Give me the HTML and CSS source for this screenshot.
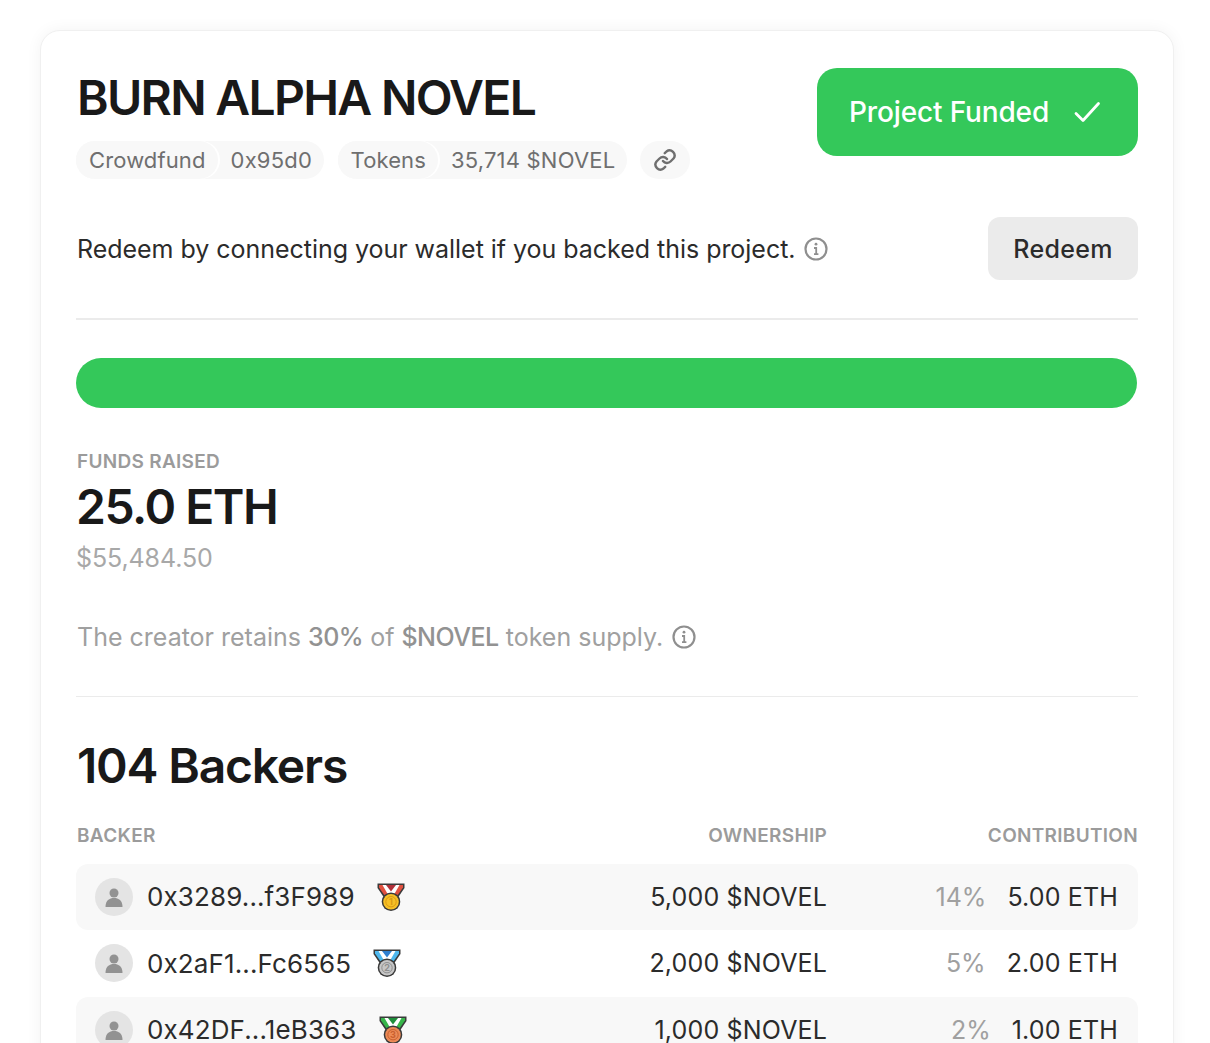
FILE: index.html
```html
<!DOCTYPE html>
<html lang="en">
<head>
<meta charset="utf-8">
<title>BURN ALPHA NOVEL</title>
<link rel="stylesheet" href="styles.css">
</head>
<body>
<main class="card">
  <header class="top">
    <div class="top-left">
      <h1 class="title">BURN ALPHA NOVEL</h1>
      <div class="tags">
        <div class="tag"><span class="tag-key">Crowdfund</span><span class="tag-val">0x95d0</span></div>
        <div class="tag"><span class="tag-key">Tokens</span><span class="tag-val">35,714 $NOVEL</span></div>
        <div class="tag-link">
          <svg class="link-icon" viewBox="0 0 24 24" fill="none" stroke="currentColor" stroke-width="2.4" stroke-linecap="round" stroke-linejoin="round"><path d="M10 13a5 5 0 0 0 7.500.5l3-3a5 5 0 0 0-7-7l-1.700 1.700"/><path d="M14 11a5 5 0 0 0-7.500-.5l-3 3a5 5 0 0 0 7 7l1.700-1.700"/></svg>
        </div>
      </div>
    </div>
    <div class="funded">
      <span>Project Funded</span>
      <svg class="check" viewBox="0 0 28 28" fill="none" stroke="currentColor" stroke-width="2.8" stroke-linecap="round" stroke-linejoin="round"><path d="M3 15.500l7 7L25.500 5.500"/></svg>
    </div>
  </header>

  <section class="redeem">
    <p class="redeem-text">Redeem by connecting your wallet if you backed this project.
      <svg class="info" viewBox="0 0 24 24" fill="none" stroke="currentColor" stroke-width="2.2"><circle cx="12" cy="12" r="10.5"/><path d="M10 11h2.200v6M10 17.200h4.400" stroke-width="1.8"/><circle cx="12" cy="7.200" r="1.400" fill="currentColor" stroke="none"/></svg>
    </p>
    <div class="redeem-btn">Redeem</div>
  </section>

  <div class="progress"></div>

  <section class="funds">
    <div class="label">FUNDS RAISED</div>
    <div class="amount">25.0 ETH</div>
    <div class="usd">$55,484.50</div>
  </section>

  <p class="retain">The creator retains <b>30%</b> of <b>$NOVEL</b> token supply.
    <svg class="info" viewBox="0 0 24 24" fill="none" stroke="currentColor" stroke-width="2.2"><circle cx="12" cy="12" r="10.5"/><path d="M10 11h2.200v6M10 17.200h4.400" stroke-width="1.8"/><circle cx="12" cy="7.200" r="1.400" fill="currentColor" stroke="none"/></svg>
  </p>

  <section class="backers">
    <h2 class="backers-title">104 Backers</h2>
    <div class="table-head">
      <span class="label">BACKER</span>
      <span class="label right">OWNERSHIP</span>
      <span class="label right">CONTRIBUTION</span>
    </div>

    <div class="row shaded">
      <div class="who">
        <span class="avatar"><svg viewBox="0 0 38 38"><circle cx="19" cy="15" r="4.500"/><path d="M10.500 29c0-6.500 3.800-9 8.500-9s8.500 2.500 8.500 9z"/></svg></span>
        <span class="addr">0x3289...f3F989</span>
        <svg class="medal gold" viewBox="0 0 28 28"><path class="m-line" d="M.5 .5h27v4.500L20 16H8L.5 5z"/><path class="m-outer" d="M2 2h24v2.500L19 14.500H9L2 4.500z"/><path class="m-white" d="M5.500 2h17l-6 10.500h-5z"/><path class="m-core" d="M9 2h10l-5 6.500z"/><circle class="m-line" cx="14" cy="18.700" r="9.300"/><circle class="m-coin" cx="14" cy="18.700" r="7.800"/><circle class="m-ring" cx="14" cy="18.700" r="5.200"/><text class="m-num" x="14" y="22">1</text></svg>
      </div>
      <div class="own">5,000 $NOVEL</div>
      <div class="contrib"><span class="pct">14%</span><span class="eth">5.00 ETH</span></div>
    </div>

    <div class="row">
      <div class="who">
        <span class="avatar"><svg viewBox="0 0 38 38"><circle cx="19" cy="15" r="4.500"/><path d="M10.500 29c0-6.500 3.800-9 8.500-9s8.500 2.500 8.500 9z"/></svg></span>
        <span class="addr">0x2aF1...Fc6565</span>
        <svg class="medal silver" viewBox="0 0 28 28"><path class="m-line" d="M.5 .5h27v4.500L20 16H8L.5 5z"/><path class="m-outer" d="M2 2h24v2.500L19 14.500H9L2 4.500z"/><path class="m-white" d="M5.500 2h17l-6 10.500h-5z"/><path class="m-core" d="M9 2h10l-5 6.500z"/><circle class="m-line" cx="14" cy="18.700" r="9.300"/><circle class="m-coin" cx="14" cy="18.700" r="7.800"/><circle class="m-ring" cx="14" cy="18.700" r="5.200"/><text class="m-num" x="14" y="22">2</text></svg>
      </div>
      <div class="own">2,000 $NOVEL</div>
      <div class="contrib"><span class="pct">5%</span><span class="eth">2.00 ETH</span></div>
    </div>

    <div class="row shaded">
      <div class="who">
        <span class="avatar"><svg viewBox="0 0 38 38"><circle cx="19" cy="15" r="4.500"/><path d="M10.500 29c0-6.500 3.800-9 8.500-9s8.500 2.500 8.500 9z"/></svg></span>
        <span class="addr">0x42DF...1eB363</span>
        <svg class="medal bronze" viewBox="0 0 28 28"><path class="m-line" d="M.5 .5h27v4.500L20 16H8L.5 5z"/><path class="m-outer" d="M2 2h24v2.500L19 14.500H9L2 4.500z"/><path class="m-white" d="M5.500 2h17l-6 10.500h-5z"/><path class="m-core" d="M9 2h10l-5 6.500z"/><circle class="m-line" cx="14" cy="18.700" r="9.300"/><circle class="m-coin" cx="14" cy="18.700" r="7.800"/><circle class="m-ring" cx="14" cy="18.700" r="5.200"/><text class="m-num" x="14" y="22">3</text></svg>
      </div>
      <div class="own">1,000 $NOVEL</div>
      <div class="contrib"><span class="pct">2%</span><span class="eth">1.00 ETH</span></div>
    </div>
  </section>
</main>
</body>
</html>
```

FILE: styles.css
```css
* { box-sizing: border-box; }
html, body { height: 1043px; overflow: hidden; }
body {
  margin: 0;
  background: #fff;
  color: #1a1a1a;
  font-family: Inter, "Liberation Sans", sans-serif;
}
.card {
  margin: 30px 36px 0 40px;
  padding: 37px 35px 36px;
  min-height: 1100px;
  background: #fff;
  border: 1px solid #f0f0f0;
  border-radius: 20px;
  box-shadow: 0 0 16px rgba(0, 0, 0, 0.05);
}
.top { display: flex; justify-content: space-between; align-items: flex-start; }
.title {
  margin: 0 0 0 1px;
  font-size: 48px;
  line-height: 60px;
  font-weight: 600;
  letter-spacing: -1.7px;
  color: #191919;
}
.tags { display: flex; gap: 13.5px; margin-top: 13px; }
.tag { display: flex; height: 38px; background: #f8f8f8; border-radius: 19px; font-size: 22px; line-height: 38px; color: #6f6f6f; }
.tag-key { padding: 0 12px 0 13px; background: #f8f8f8; border-radius: 19px; box-shadow: 2px 0 0 #fff; letter-spacing: 0.12px; }
.tag-val { padding: 0 12px 0 13px; letter-spacing: 0.2px; }
.tag-link { display: flex; align-items: center; justify-content: center; width: 50px; height: 38px; margin-left: -1px; background: #f8f8f8; border-radius: 19px; color: #6f6f6f; }
.link-icon { width: 24px; height: 24px; }
.funded {
  display: flex;
  align-items: center;
  justify-content: space-between;
  width: 321px;
  height: 88px;
  padding: 0 37px 0 32px;
  background: #34c85a;
  border-radius: 20px;
  color: #fff;
  font-size: 28px;
  font-weight: 500;
  letter-spacing: -0.15px;
}
.check { width: 28px; height: 28px; }
.redeem { display: flex; justify-content: space-between; align-items: center; margin-top: 38px; padding-bottom: 38px; border-bottom: 2px solid #ebebeb; }
.redeem-text { margin: 0 0 0 1px; font-size: 25px; letter-spacing: -0.03px; line-height: 36px; color: #2b2b2b; }
.info { width: 24px; height: 24px; margin-left: 1.5px; color: #8f8f8f; vertical-align: -3px; }
.redeem-btn { width: 150px; height: 63px; border-radius: 12px; background: #ebebeb; text-align: center; font-size: 25px; letter-spacing: 0.3px; line-height: 65px; font-weight: 500; color: #2b2b2b; }
.progress { height: 50px; margin: 38px 1px 0 0; background: #34c85a; border-radius: 25px; }
.funds { margin-top: 42px; }
.label { padding-left: 1px; font-size: 19px; letter-spacing: 0.3px; line-height: 24px; font-weight: 600; color: #9b9b9b; display: block; }
.right { text-align: right; }
.amount { font-size: 48px; line-height: 60px; font-weight: 600; letter-spacing: -1.5px; margin-top: 3px; color: #191919; }
.usd { font-size: 25px; letter-spacing: -0.1px; line-height: 36px; color: #a8a8a8; margin-top: 3px; }
.retain { margin: 43px 0 0; padding: 0 0 41px 1px; border-bottom: 1px solid #ebebeb; font-size: 25px; line-height: 36px; color: #a0a0a0; }
.retain b { font-weight: 500; letter-spacing: -0.5px; color: #929292; }
.backers { margin-top: 39px; }
.backers-title { margin: 0 0 0 1px; font-size: 48px; line-height: 60px; font-weight: 600; letter-spacing: -1.2px; color: #191919; }
.table-head { display: grid; grid-template-columns: 1fr 300px 311px; margin-top: 28px; margin-bottom: 15.7px; }
.row { display: grid; grid-template-columns: 1fr 300px 291px; align-items: center; height: 66.5px; padding: 0 20px 0 19px; border-radius: 12px; font-size: 25px; letter-spacing: 0.15px; color: #2b2b2b; }
.shaded { background: #f8f8f8; }
.who { display: flex; align-items: center; }
.avatar { width: 38px; height: 38px; border-radius: 50%; background: #e4e4e4; flex: none; }
.avatar svg { display: block; width: 38px; height: 38px; fill: #929292; }
.addr { margin-left: 14px; font-size: 26px; letter-spacing: 0.12px; }
.medal { width: 28px; height: 28px; margin-left: 22px; flex: none; }
.m-line { fill: #3a3a3a; }
.m-coin { fill: var(--coin); }
.m-ring { fill: none; stroke: var(--ring); stroke-width: 1; }
.m-outer { fill: var(--outer); }
.m-white { fill: #fff; }
.m-core { fill: var(--core); }
.m-num { font-family: Inter, sans-serif; font-size: 9px; font-weight: 700; letter-spacing: 0; fill: var(--ring); text-anchor: middle; }
.gold { --coin: #f6c026; --ring: #d99a14; --outer: #e0503f; --core: #b0303a; }
.silver { --coin: #c6c6c6; --ring: #8f8f8f; --outer: #4fb8ee; --core: #2f7fd0; }
.bronze { --coin: #ec8a56; --ring: #c9602e; --outer: #37b54a; --core: #1e8f3a; }
.own { text-align: right; }
.contrib { display: flex; justify-content: flex-end; gap: 21px; }
.pct { color: #a0a0a0; letter-spacing: 0; }
```
